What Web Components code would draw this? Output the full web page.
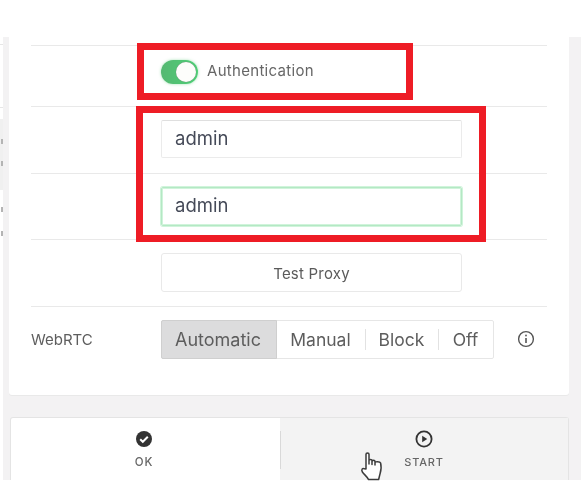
<!DOCTYPE html>
<html lang="en"><head><meta charset="utf-8"><title>Proxy settings</title>
<style>
html,body{margin:0;padding:0;background:#fff}
body{font-family:Inter,"Liberation Sans",sans-serif;width:581px;height:497px;overflow:hidden}
</style></head><body>
<x-app>
  <x-strip slot="strip"></x-strip>
  <x-card slot="card">
    <x-row kind="stub"></x-row>
    <x-row h="61"><x-toggle>Authentication</x-toggle></x-row>
    <x-row h="67"><x-input value="admin"></x-input></x-row>
    <x-row h="66"><x-input value="admin" focused></x-input></x-row>
    <x-row h="67"><x-btn>Test Proxy</x-btn></x-row>
    <x-row h="88" last label="WebRTC">
      <x-seg><span slot="a">Automatic</span><span slot="b">Manual</span><span slot="c">Block</span><span slot="d">Off</span></x-seg>
    </x-row>
  </x-card>
  <x-actions slot="actions"></x-actions>
</x-app>
<script>
function def(name, css, html, init){
  customElements.define(name, class extends HTMLElement{
    constructor(){super();const r=this.attachShadow({mode:'open'});
      r.innerHTML='<style>'+css+'</style>'+html;}
    connectedCallback(){ if(init) init.call(this,this.shadowRoot); }
  });
}
def('x-app',`
 :host{display:grid;grid-template-rows:37px 443px 17px;width:581px;height:497px;position:relative;overflow:hidden;filter:blur(.6px);color:#555}
 .main{grid-row:2;display:grid;grid-template-columns:3px 1fr;background:#f3f2f3;min-height:0}
 .content{display:flex;flex-direction:column;padding:0 12px 0 6px;gap:22px;min-width:0}
 .mark{position:absolute;box-sizing:border-box;border:7.7px solid #ee1c25}
 .m1{left:137px;top:43px;width:276px;height:57px}
 .m2{left:136px;top:106px;width:350px;height:136px}
 .hand{position:absolute;left:360px;top:450px}
`,`<div class="main"><slot name="strip"></slot><div class="content"><slot name="card"></slot><slot name="actions"></slot></div></div>
 <div class="mark m1"></div><div class="mark m2"></div>
 <svg class="hand" width="24" height="31" viewBox="0 0 24 31" fill="#fff" stroke="#3c3c3c" stroke-width="1.5" stroke-linejoin="round" stroke-linecap="round"><path d="M6 19V4.2C6 2.6 9 2.6 9 4.2V14V10.6C9 9.2 12 9.2 12 10.6V14.5V11.4C12 10 15 10 15 11.4V15V12.6C15 11.4 20 11.2 20.6 13C21.4 16 21 21 20 24C19.4 26 19 28 18.6 29.6H8.6C7 26.4 4 24.4 2.4 22C1 19.8 2.4 17.8 4.4 18.8Z"/></svg>`);
def('x-strip',`
 :host{display:flex;flex-direction:column;width:3px;overflow:hidden;background:#fff}
 .a{height:82px;box-sizing:border-box;padding-top:7px}
 .a i{display:block;height:1px;background:#e6e6e6;margin-bottom:62px}
 .b,.c{display:flex;flex-direction:column;align-items:flex-end;box-sizing:border-box}
 .b{height:71px;background:#f0f0f0;padding-top:20px;gap:17px}
 .c{flex:1;padding-top:17px;gap:19px}
 u{display:block;width:2px;height:5px;background:#b4b4b4}
`,`<div class="a"><i></i><i></i></div><div class="b"><u></u><u></u></div><div class="c"><u></u><u></u></div>`);
def('x-card',`
 :host{display:block;height:358px;background:#fff;border-radius:0 0 3px 3px;padding:0 22px;box-sizing:border-box;box-shadow:0 1px 0 #e9e9e9;overflow:hidden}
`,`<slot></slot>`);
def('x-row',`
 :host{display:grid;grid-template-columns:130px 1fr;box-sizing:border-box;border-bottom:1px solid #e9e9e9;font-size:15px;color:#5e5e5e}
 :host([kind=stub]){height:9px}
 :host([last]){border-bottom:0}
 .l{padding-top:20px;line-height:26px}
 .c{padding-top:13px;min-width:0}
`,`<div class="l"></div><div class="c"><slot></slot></div>`,function(r){
  if(this.getAttribute('h'))this.style.height=this.getAttribute('h')+'px';
  r.querySelector('.l').textContent=this.getAttribute('label')||'';
  if(this.getAttribute('kind')==='stub')r.querySelector('.c').style.paddingTop=0;
});
def('x-toggle',`
 :host{display:flex;align-items:center;gap:9px;height:25px;font-size:15px;letter-spacing:.3px;color:#666;line-height:23px}
 .x{padding-bottom:2px}
 .t{width:37px;height:24px;border-radius:12px;background:linear-gradient(90deg,#55b872,#4ed076);position:relative;flex:none;box-shadow:0 0 3px rgba(76,200,110,.5)}
 .t::after{content:"";position:absolute;right:2px;top:2px;width:20px;height:20px;border-radius:50%;background:#fdfdfb;box-shadow:0 0 1px #777}
`,`<span class="t"></span><span class="x"><slot></slot></span>`);
def('x-input',`
 :host{display:block;width:301px;height:38px}
 .f{box-sizing:border-box;height:100%;border:1px solid #ebebeb;border-top-color:#dfdfdf;border-radius:2px;padding:0 13px 3px;display:flex;align-items:center;font-size:18.5px;color:#454a58;line-height:32px}
 .f.on{border-color:#b4e8c4;box-shadow:inset 0 0 0 1px rgba(170,235,190,.55),0 0 0 1px rgba(170,235,190,.55)}
`,`<div class="f"></div>`,function(r){const f=r.querySelector('.f');f.textContent=this.getAttribute('value');
  if(this.hasAttribute('focused')){this.style.height='39px';f.classList.add('on');}});
def('x-btn',`
 :host{display:flex;box-sizing:border-box;width:301px;height:39px;padding-top:2px;border:1px solid #e9e9e9;border-radius:3px;align-items:center;justify-content:center;font-size:15px;letter-spacing:.2px;color:#5a5a5a}
`,`<slot></slot>`);
def('x-seg',`
 :host{display:flex;position:relative;width:333px;height:39px;box-sizing:border-box;border:1px solid #e6e6e6;border-radius:2px;font-size:17.5px;color:#5d5d5d;align-items:stretch}
 .s{display:flex;align-items:center;justify-content:center;position:relative}
 .a{width:116px;margin:-1px 0 -1px -1px;background:#dcdcdd;border:1px solid #cfcfcf;box-sizing:border-box;border-radius:2px 0 0 2px;font-size:18px;padding-right:2px}
 .b{width:88px;padding-right:1px;box-sizing:border-box}.c{width:73px}.d{flex:1}
 .c::before,.d::before{content:"";position:absolute;left:0;top:8px;bottom:8px;width:1px;background:#e2e2e2}
 .i{position:absolute;left:355px;top:9px}
`,`<div class="s a"><slot name="a"></slot></div><div class="s b"><slot name="b"></slot></div><div class="s c"><slot name="c"></slot></div><div class="s d"><slot name="d"></slot></div>
 <svg class="i" width="18" height="18" viewBox="0 0 18 18" fill="none" stroke="#555" stroke-width="1.4"><circle cx="9" cy="9" r="7.4"/><path d="M9 8v5" stroke-width="1.6"/><circle cx="9" cy="5.5" r=".9" fill="#555" stroke="none"/></svg>`);
def('x-actions',`
 :host{display:grid;grid-template-columns:269px 1fr;height:63px;margin-left:1px;box-sizing:border-box;border:1px solid #e4e4e4;border-bottom:0;border-radius:3px 3px 0 0;background:#fff;font-size:11px;font-weight:500;letter-spacing:.8px;color:#666}
 .b{display:flex;flex-direction:column;align-items:center;padding-top:12px;gap:6px;position:relative}
 .ok{padding-right:3px;font-size:11.5px}
 .st{background:#f3f3f3}
 .st::before{content:"";position:absolute;left:0;top:13px;height:38px;width:1px;background:#d9d9d9}
 svg{display:block}
 span{line-height:16px}
`,`<div class="b ok"><svg width="18" height="18" viewBox="0 0 18 18"><circle cx="9" cy="9" r="8" fill="#333"/><path d="M5.2 9.3l2.6 2.5 5-5" fill="none" stroke="#fff" stroke-width="2"/></svg><span>OK</span></div>
 <div class="b st"><svg width="18" height="18" viewBox="0 0 18 18"><circle cx="9" cy="9" r="7.6" fill="none" stroke="#333" stroke-width="1.8"/><path d="M7.2 5.8L12.2 9L7.2 12.2Z" fill="#333"/></svg><span>START</span></div>`);
</script>
</body></html>
